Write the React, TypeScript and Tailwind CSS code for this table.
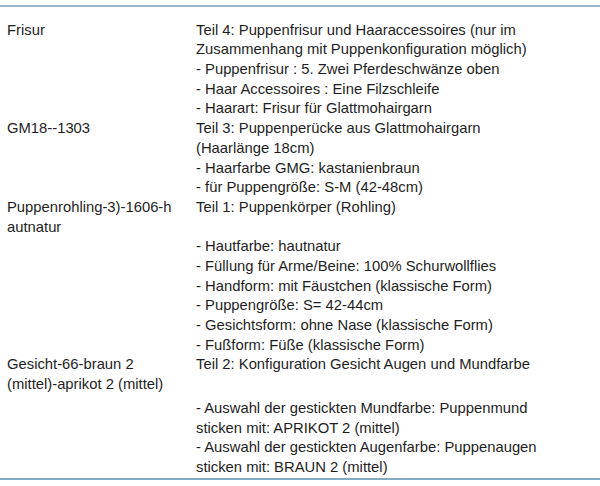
const rows = [
  {
    left: ["Frisur"],
    right: [
      "Teil 4: Puppenfrisur und Haaraccessoires (nur im",
      "Zusammenhang mit Puppenkonfiguration möglich)",
      "- Puppenfrisur : 5. Zwei Pferdeschwänze oben",
      "- Haar Accessoires : Eine Filzschleife",
      "- Haarart: Frisur für Glattmohairgarn",
    ],
  },
  {
    left: ["GM18--1303"],
    right: [
      "Teil 3: Puppenperücke aus Glattmohairgarn",
      "(Haarlänge 18cm)",
      "- Haarfarbe GMG: kastanienbraun",
      "- für Puppengröße: S-M (42-48cm)",
    ],
  },
  {
    left: ["Puppenrohling-3)-1606-h", "autnatur"],
    right: [
      "Teil 1: Puppenkörper (Rohling)",
      "",
      "- Hautfarbe: hautnatur",
      "- Füllung für Arme/Beine: 100% Schurwollflies",
      "- Handform: mit Fäustchen (klassische Form)",
      "- Puppengröße: S= 42-44cm",
      "- Gesichtsform: ohne Nase (klassische Form)",
      "- Fußform: Füße (klassische Form)",
    ],
  },
  {
    left: ["Gesicht-66-braun 2", "(mittel)-aprikot 2 (mittel)"],
    right: [
      "Teil 2: Konfiguration Gesicht Augen und Mundfarbe",
      "",
      "- Auswahl der gestickten Mundfarbe: Puppenmund",
      "sticken mit: APRIKOT 2 (mittel)",
      "- Auswahl der gestickten Augenfarbe: Puppenaugen",
      "sticken mit: BRAUN 2 (mittel)",
    ],
    tallBlank: true,
  },
];

const Lines = ({ items, tallBlank }: { items: string[]; tallBlank?: boolean }) => (
  <div>
    {items.map((t, i) =>
      t ? (
        <div key={i} className="h-[19.7px] whitespace-nowrap">
          {t}
        </div>
      ) : (
        <div key={i} className={tallBlank ? "h-[24px]" : "h-[19.7px]"} />
      )
    )}
  </div>
);

export default function App() {
  return (
    <div className="w-[600px] h-[486px] overflow-hidden bg-white text-[14.8px] leading-[19.7px] text-[#1e1e1e] font-['Liberation_Sans',Arial,sans-serif]">
      {/* header, mostly scrolled off */}
      <div className="-mt-[16px] grid grid-cols-[189px_1fr_12px] border-b-2 border-[#98b6c8] pb-px font-bold">
        <div className="pl-[7px]">Artikel-Nr.</div>
        <div className="pl-[7px]">Artikel</div>
        <div className="pl-[6px]">M</div>
      </div>

      <div className="border-b-2 border-[#84aac2] pt-[14px]">
        {rows.map((r, i) => (
          <div key={i} className="grid grid-cols-[189px_1fr]">
            <div className="pl-[7px]">
              <Lines items={r.left} />
            </div>
            <div className="pl-[7px]">
              <Lines items={r.right} tallBlank={r.tallBlank} />
            </div>
          </div>
        ))}
      </div>
    </div>
  );
}
